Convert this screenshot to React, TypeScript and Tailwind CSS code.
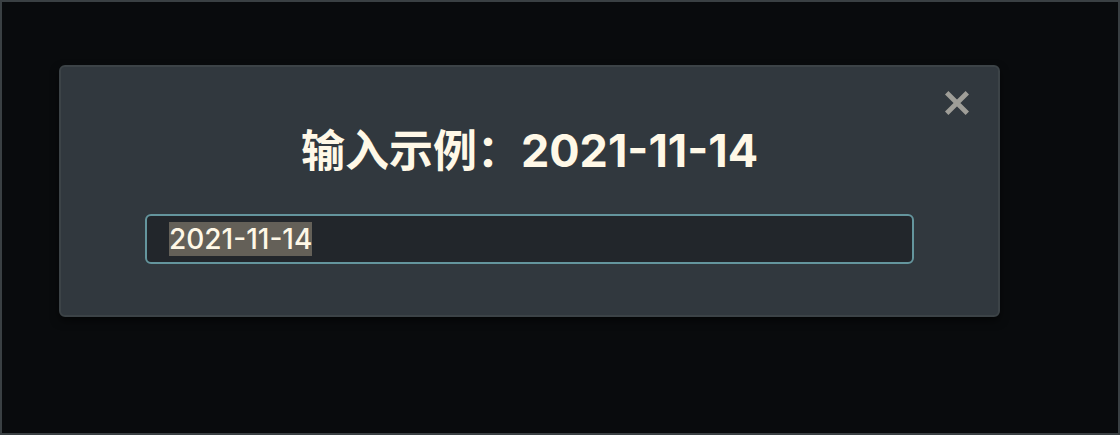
import { useEffect, useRef } from "react";

export default function App() {
  const field = useRef<HTMLInputElement>(null);

  useEffect(() => {
    const selectAll = () => field.current?.select();
    field.current?.focus();
    selectAll();
    document.fonts.ready.then(selectAll);
  }, []);

  return (
    <main className="min-h-screen border-2 border-[#3a4043] bg-[#090b0d] pt-[63px] pr-[118px] pb-16 pl-[57px] font-['Inter','Noto_Sans_CJK_SC',sans-serif] text-[#fff8e7]">
      <section
        role="dialog"
        aria-labelledby="prompt-title"
        className="relative rounded-md border-2 border-[#3c4347] bg-[#31383e] px-[84px] pt-14 pb-[51px] shadow-[0_4px_8px_rgba(0,0,0,0.5)]"
      >
        <button
          type="button"
          aria-label="关闭"
          className="absolute top-[18px] right-[23px] flex size-9 items-center justify-center text-[#9f9e98]"
        >
          <svg viewBox="0 0 24 24" className="size-6" fill="none" stroke="currentColor" strokeWidth="4.8">
            <path d="M1.7 1.7 22.3 22.3M22.3 1.7 1.7 22.3" />
          </svg>
        </button>
        <h1 id="prompt-title" className="text-center text-[44px] leading-[56px] font-bold">
          <label htmlFor="date-field">
            输入示例：<span className="text-[45px]">2021-11-14</span>
          </label>
        </h1>
        <input
          ref={field}
          id="date-field"
          type="text"
          defaultValue="2021-11-14"
          className="mt-[35px] block h-[50px] w-full rounded-md border-2 border-[#64959d] bg-[#22262b] px-[22px] text-[28px] leading-[33px] font-medium outline-none selection:bg-[#656159]/99 selection:text-[#fff8e7]"
        />
      </section>
    </main>
  );
}
